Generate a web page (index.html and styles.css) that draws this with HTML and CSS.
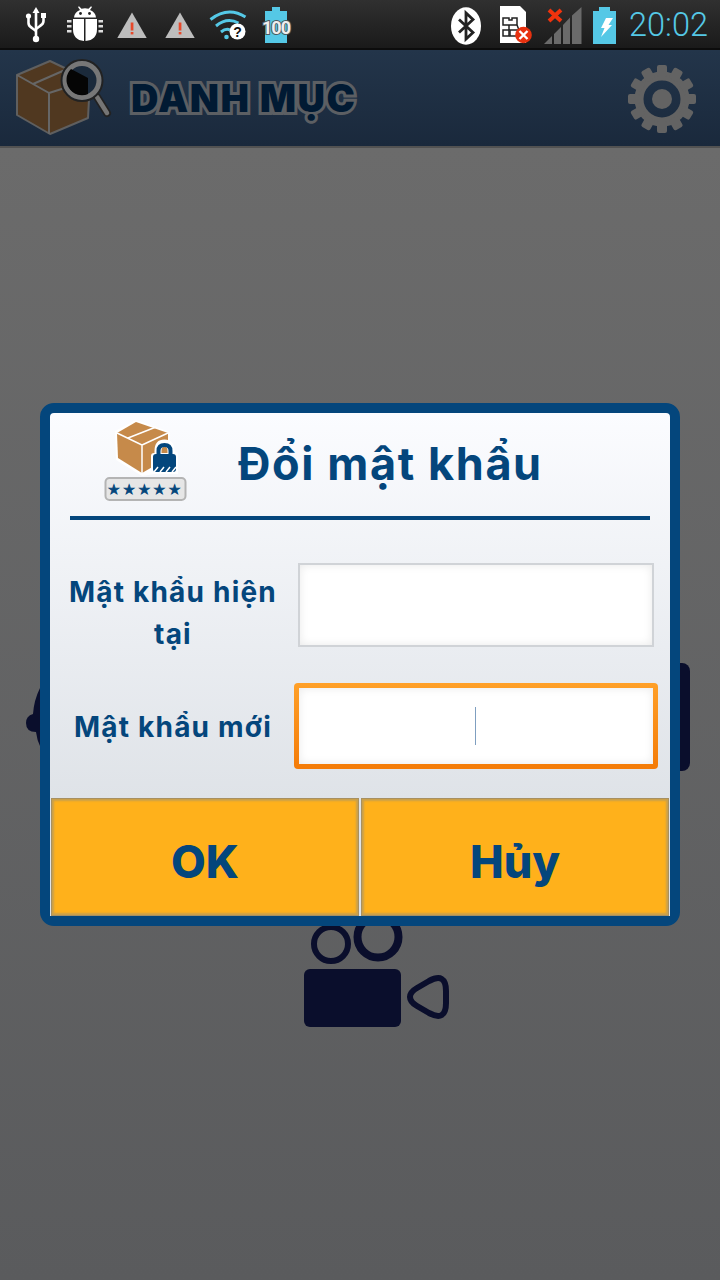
FILE: index.html
```html
<!DOCTYPE html>
<html lang="vi">
<head>
<meta charset="utf-8">
<title>Danh mục</title>
<link rel="stylesheet" href="styles.css">
</head>
<body>
<div class="page">
  <div class="statusbar">
    <div class="status-group">
      <svg class="slot" viewBox="0 0 48 50"><g fill="none" stroke="#fff" stroke-width="2.6"><path d="M24 10V39"/><path d="M16.500 17V23Q16.500 26 20 28L24 31"/><path d="M31.500 15V21Q31.500 24 28 26L24 29"/></g><path d="M24 7l3.500 6h-7z" fill="#fff"/><circle cx="16.500" cy="16" r="2.600" fill="#fff"/><rect x="29" y="13" width="5" height="5" fill="#fff"/><circle cx="24" cy="39" r="3.200" fill="#fff"/></svg>
      <svg class="slot" viewBox="0 0 48 50"><path d="M13 19H24V41Q13 40 13 29ZM25.500 19H37V29Q37 40 25.500 41Z" fill="#fff"/><path d="M14 17.500Q14.500 12 20 10L18 7l1-.8 2.500 2.600Q25 7.500 28.500 8.800L31 6.200l1 .8L30 10Q35.500 12 36 17.500Z" fill="#fff"/><circle cx="20.500" cy="13.500" r="1.400" fill="#222"/><circle cx="29.500" cy="13.500" r="1.400" fill="#222"/><g fill="#ddd"><rect x="7" y="20" width="4.500" height="2.500"/><rect x="7" y="25" width="4.500" height="2.500"/><rect x="7" y="30" width="4.500" height="2.500"/><rect x="38.500" y="20" width="4.500" height="2.500"/><rect x="38.500" y="25" width="4.500" height="2.500"/><rect x="38.500" y="30" width="4.500" height="2.500"/></g></svg>
      <svg class="slot" viewBox="0 0 48 50"><path d="M24 12.500L38.700 38H9.300z" fill="#bdbdbd"/><rect x="22.700" y="22.500" width="2.700" height="8" fill="#e8482a"/><rect x="22.700" y="32" width="2.700" height="2.400" fill="#e8482a"/></svg>
      <svg class="slot" viewBox="0 0 48 50"><path d="M24 12.500L38.700 38H9.300z" fill="#bdbdbd"/><rect x="22.700" y="22.500" width="2.700" height="8" fill="#e8482a"/><rect x="22.700" y="32" width="2.700" height="2.400" fill="#e8482a"/></svg>
      <svg class="slot" viewBox="0 0 48 50"><g fill="none" stroke="#55c8e6" stroke-width="3"><path d="M6.500 19.500Q24 6 41.500 17"/><path d="M12 26Q23 17 34.500 23"/><path d="M17 32Q22 28 26 30"/></g><circle cx="22.500" cy="37" r="2.300" fill="#55c8e6"/><circle cx="33.500" cy="31.500" r="8" fill="#fff"/><text class="wifi-q" x="33.500" y="36.500">?</text></svg>
      <svg class="slot" viewBox="0 0 48 50"><path d="M13 11H20V7H28V11H35V43H13Z" fill="#55c8e6"/><text class="batt-num" x="24" y="34">100</text></svg>
    </div>
    <div class="status-group status-right">
      <svg class="slot" viewBox="0 0 48 50"><ellipse cx="22" cy="26" rx="15" ry="18.700" fill="#fff"/><path d="M15 19.500L29 32.500L22 39V13L29 19.500L15 32.500" fill="none" stroke="#222" stroke-width="2.800"/></svg>
      <svg class="slot" viewBox="0 0 48 50"><path d="M8 6H28L34 12V43H8Z" fill="#fff"/><g fill="none" stroke="#222" stroke-width="1.500"><path d="M11 18H17V20H20V18H25V25H11Z"/><path d="M11 30H17V36H11Z"/><path d="M18 30H28V36H18Z"/><path d="M17 25V30M25 25L27 30"/></g><circle cx="31.500" cy="35" r="8.300" fill="#e8310f"/><path d="M27.500 31L35.500 39M35.500 31L27.500 39" stroke="#fff" stroke-width="2.400"/></svg>
      <svg class="slot slot-signal" viewBox="0 0 46 50"><path d="M4 44L12 36V44ZM14 34L21 27V44H14ZM23 25L30 17.500V44H23ZM32 15.500L41.500 7V44H32Z" fill="#6a6a6a"/><path d="M9 10L21 21M21 10L9 21" stroke="#f1330d" stroke-width="4"/></svg>
      <svg class="slot slot-batt" viewBox="0 0 36 50"><path d="M7 11H13V7H24V11H30V44H7Z" fill="#55c8e6"/><path d="M20 18H27L22.500 25H26L15 37L18.500 28H15Z" fill="#fff"/></svg>
      <span class="clock">20:02</span>
    </div>
  </div>

  <header class="appbar">
    <svg class="appbar-logo" viewBox="0 0 100 84">
      <path d="M4 19L37 5L77 24L75 62L37 78L4 59Z" fill="#503820" stroke="#5f5f5f" stroke-width="2" stroke-linejoin="round"/>
      <path d="M4 19L36 37V78M36 37L77 24M20 28L52 14" fill="none" stroke="#666" stroke-width="2"/>
      <path d="M84 41L94 57" stroke="#222" stroke-width="8" stroke-linecap="round"/>
      <path d="M84 41L94 57" stroke="#757575" stroke-width="4.500" stroke-linecap="round"/>
      <circle cx="69" cy="24.500" r="20.500" fill="#1b2a3b" stroke="#222" stroke-width="2"/>
      <circle cx="69" cy="24.500" r="17" fill="none" stroke="#777" stroke-width="5"/>
      <path d="M58 13L75 22V38A15 15 0 0 1 56 32A15 15 0 0 1 58 13Z" fill="#050505"/>
    </svg>
    <h1 class="appbar-title">DANH MỤC</h1>
    <svg class="appbar-gear" viewBox="0 0 72 72">
      <circle cx="36" cy="36" r="23" fill="none" stroke="#636363" stroke-width="9"/>
      <g fill="#636363"><rect x="31" y="2" width="10" height="12" rx="2"/><rect x="31" y="2" width="10" height="12" rx="2" transform="rotate(30 36 36)"/><rect x="31" y="2" width="10" height="12" rx="2" transform="rotate(60 36 36)"/><rect x="31" y="2" width="10" height="12" rx="2" transform="rotate(90 36 36)"/><rect x="31" y="2" width="10" height="12" rx="2" transform="rotate(120 36 36)"/><rect x="31" y="2" width="10" height="12" rx="2" transform="rotate(150 36 36)"/><rect x="31" y="2" width="10" height="12" rx="2" transform="rotate(180 36 36)"/><rect x="31" y="2" width="10" height="12" rx="2" transform="rotate(210 36 36)"/><rect x="31" y="2" width="10" height="12" rx="2" transform="rotate(240 36 36)"/><rect x="31" y="2" width="10" height="12" rx="2" transform="rotate(270 36 36)"/><rect x="31" y="2" width="10" height="12" rx="2" transform="rotate(300 36 36)"/><rect x="31" y="2" width="10" height="12" rx="2" transform="rotate(330 36 36)"/><circle cx="36" cy="36" r="10"/></g>
    </svg>
  </header>

  <main class="content">
    <svg class="art art-left" viewBox="0 0 16 64"><path d="M15 0Q9 12 8 26Q1 28 1 35Q1 44 11 44Q12 52 15 58Z" fill="#0a0e2c"/></svg>
    <div class="art art-right"></div>
    <svg class="art art-camera" viewBox="0 0 146 108">
      <circle cx="27" cy="25" r="17" fill="none" stroke="#0a0e2c" stroke-width="6"/>
      <circle cx="74" cy="18" r="20.500" fill="none" stroke="#0a0e2c" stroke-width="8"/>
      <rect x="0" y="50" width="97" height="58" rx="6" fill="#0a0e2c"/>
      <path d="M106 78Q106 73 113 69L125 62Q142 53 142 72V84Q142 103 125 94L113 87Q106 83 106 78Z" fill="none" stroke="#0a0e2c" stroke-width="6"/>
    </svg>
  </main>

  <section class="dialog">
    <div class="dialog-head">
      <svg class="dialog-icon" viewBox="0 0 84 84">
        <path d="M11 13L32 2L66 14V28L74 36V56H50L38 58L12 42Z" fill="#fff"/>
        <path d="M13 15L32 4L64 15V40L38 55L14 40Z" fill="#c68a4a"/>
        <path d="M13 15L38 27V55M38 27L64 15M24 20L52 9" fill="none" stroke="#fff" stroke-width="1.500"/>
        <path d="M54 37V33Q54 25 60.500 25Q67 25 67 33V37" fill="none" stroke="#fff" stroke-width="7"/>
        <rect x="47" y="35" width="27" height="21" rx="3" fill="#fff"/>
        <path d="M54.500 37V33Q54.500 27 60.500 27Q66.500 27 66.500 33V37" fill="none" stroke="#04467c" stroke-width="4"/>
        <rect x="49" y="36" width="23" height="18" rx="3" fill="#04467c"/>
        <path d="M50 54L54 49M56 54L60 49M62 54L66 49M68 54L72 49" stroke="#fff" stroke-width="1.500"/>
        <rect x="1.500" y="60" width="80" height="22" rx="4" fill="#e6e6e6" stroke="#b4b4b4" stroke-width="2"/>
        <text class="stars" x="42" y="76">★★★★★</text>
      </svg>
      <h2 class="dialog-title">Đổi mật khẩu</h2>
    </div>
    <div class="form">
      <label class="field-label field-label-low">Mật khẩu hiện tại</label>
      <div class="input"></div>
      <label class="field-label">Mật khẩu mới</label>
      <div class="input-focus"><div class="input-inner"><span class="caret"></span></div></div>
    </div>
    <div class="actions">
      <button class="btn">OK</button>
      <button class="btn">Hủy</button>
    </div>
  </section>
</div>
</body>
</html>
```
FILE: styles.css
```css
* { box-sizing: border-box; }
html, body { margin: 0; padding: 0; }
body { width: 720px; height: 1280px; overflow: hidden; background: #5f5f60; font-family: "Inter", "Liberation Sans", sans-serif; }
.page { position: relative; width: 720px; height: 1280px; display: flex; flex-direction: column; }

.statusbar { height: 50px; flex: none; display: flex; justify-content: space-between; background: linear-gradient(#303030, #1a1a1a); border-bottom: 2px solid #0c0c0c; }
.status-group { display: flex; padding-left: 12px; }
.status-right { padding-left: 0; padding-right: 12px; }
.slot { width: 48px; height: 50px; flex: none; display: block; }
.slot-signal { width: 46px; }
.slot-batt { width: 36px; }
.clock { margin-left: 6px; width: 80px; font-family: "Roboto", sans-serif; font-size: 32.500px; font-weight: 300; line-height: 50px; color: #55c8e6; text-align: right; white-space: nowrap; }
.wifi-q { font: bold 14px "Liberation Sans", sans-serif; fill: #111; text-anchor: middle; }
.batt-num { font: 700 18px "Roboto", sans-serif; fill: #eee; stroke: #4a5a60; stroke-width: 2px; paint-order: stroke fill; text-anchor: middle; letter-spacing: -1px; }

.appbar { height: 98px; flex: none; display: flex; align-items: center; padding: 0 22px 0 13px; background: linear-gradient(#23354a, #1a293c); border-bottom: 2px solid #525252; }
.appbar-logo { width: 100px; height: 84px; flex: none; overflow: visible; }
.appbar-title { margin: 0 0 0 18px; flex: 1; font-family: "Inter", sans-serif; font-size: 38px; font-weight: 900; letter-spacing: 1.500px; color: #011a33; -webkit-text-stroke: 6px #5c5f63; paint-order: stroke fill; white-space: nowrap; }
.appbar-gear { width: 72px; height: 72px; flex: none; margin-top: 2px; }

.content { position: relative; flex: 1; background: linear-gradient(#6b6b6b, #5a5b5d); }
.art { position: absolute; }
.art-left { left: 25px; top: 540px; width: 16px; height: 64px; }
.art-right { left: 660px; top: 515px; width: 30px; height: 108px; border-radius: 8px; background: #0a0e2c; }
.art-camera { left: 304px; top: 771px; width: 146px; height: 108px; overflow: visible; }

.dialog { position: absolute; left: 40px; top: 403px; width: 640px; height: 523px; display: flex; flex-direction: column; border: 10px solid #04467c; border-radius: 14px; background: linear-gradient(#fbfcff, #dfe3e8 385px); }
.dialog-head { height: 107px; flex: none; margin: 0 20px; display: flex; align-items: center; border-bottom: 4px solid #04467c; padding-bottom: 2px; }
.dialog-icon { width: 84px; height: 84px; flex: none; margin-left: 34px; margin-top: -8px; }
.stars { font: 13px "DejaVu Sans", sans-serif; fill: #04467c; stroke: #04467c; stroke-width: .8px; text-anchor: middle; letter-spacing: 3.500px; }
.dialog-title { margin: 0 0 0 50px; font-family: "Inter", sans-serif; font-size: 45px; font-weight: 700; letter-spacing: 1.600px; color: #04467c; white-space: nowrap; }

.form { display: grid; grid-template-columns: 246px 1fr; align-items: center; row-gap: 36px; padding-top: 43px; flex: 1; align-content: start; }
.field-label { margin: 1px 0 -1px; font-family: "Inter", sans-serif; font-size: 28px; font-weight: 700; letter-spacing: 1.200px; line-height: 42px; color: #04467c; text-align: center; padding: 0 10px; }
.field-label-low { margin: 8px 0 -8px; }
.input { margin: 0 16px 0 2px; height: 84px; border: 2px solid #d0d3d7; background: #fff; box-shadow: inset 0 0 10px rgba(0,0,0,.09); }
.input-focus { margin: 0 12px 0 -2px; height: 86px; padding: 5px; border-radius: 4px; background: linear-gradient(#ffa028, #f47b07); }
.input-inner { height: 100%; display: flex; align-items: center; justify-content: center; background: #fff; box-shadow: inset 0 0 10px rgba(0,0,0,.09); padding-right: 1px; }
.caret { width: 1px; height: 38px; background: #7f9fc0; }

.actions { height: 118px; flex: none; display: flex; gap: 2px; padding: 0 1px; background: #dfe3e8; }
.btn { flex: 1; border: 0; padding: 8px 0 0; background: #ffb11b; box-shadow: inset 0 0 0 1px #a89060, inset 0 0 2px 3px #c9a04c; color: #04467c; font-family: "Inter", sans-serif; font-size: 45px; font-weight: 800; }
```
